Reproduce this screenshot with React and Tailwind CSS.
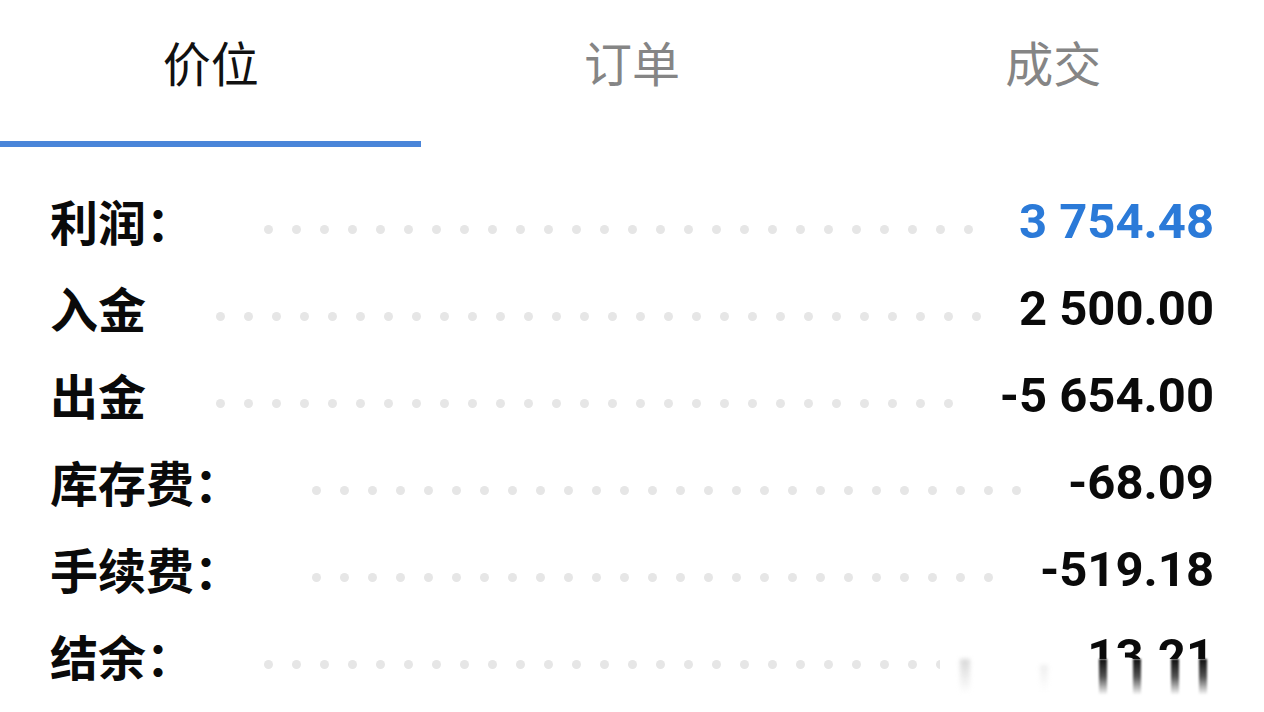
import React, { useState } from "react";

const tabs = ["价位", "订单", "成交"];

const rows = [
  { label: "利润：", value: "3 754.48", blue: true },
  { label: "入金", value: "2 500.00" },
  { label: "出金", value: "-5 654.00" },
  { label: "库存费：", value: "-68.09" },
  { label: "手续费：", value: "-519.18" },
  { label: "结余：", value: "13.21", last: true },
];

const cjk = "font-['Noto_Sans_CJK_SC','Noto_Sans',sans-serif]";
const num = "font-['Roboto','Liberation_Sans',sans-serif]";

// dotted leader between the label and the amount; dots that don't fit wrap away
function Dots() {
  return (
    <div className="flex-1 ml-[70px] mr-[32px] mt-[16px] h-[9px] overflow-hidden flex flex-wrap gap-x-[19px]">
      {Array.from({ length: 40 }).map((_, i) => (
        <span key={i} className="w-[9px] h-[9px] rounded-full bg-[#e6e6e6] shrink-0" />
      ))}
    </div>
  );
}

export default function App() {
  const [tab, setTab] = useState(0);

  return (
    <div className={"w-[1264px] h-[712px] bg-white overflow-hidden " + cjk}>
      <div className="flex">
        {tabs.map((t, i) => (
          <button
            key={t}
            type="button"
            onClick={() => setTab(i)}
            className="flex-1 flex flex-col"
          >
            <div
              className={
                "h-[122px] flex items-center justify-center text-[48px] leading-none " +
                (tab === i ? "text-[#111111]" : "text-[#858585]")
              }
            >
              {t}
            </div>
            <div className="h-[19px]" />
            <div className={"h-[6px] w-full " + (tab === i ? "bg-[#4a85d9]" : "bg-transparent")} />
          </button>
        ))}
      </div>

      <div className="pt-[31px] px-[50px]">
        {rows.map((r) => (
          <div key={r.label} className="relative h-[87px] flex items-center">
            <div className="mb-[4px] text-[48px] leading-none font-bold text-[#0a0a0a] whitespace-nowrap">
              {r.label}
            </div>
            <Dots />
            <div
              className={
                num +
                " text-[49px] leading-none font-bold whitespace-nowrap " +
                (r.blue ? "text-[#2b7ad8]" : "text-[#0a0a0a]")
              }
            >
              {r.value}
            </div>
            {r.last && (
              <div className="absolute left-[890px] right-[-40px] top-[46px] h-[40px] bg-white">
                <div className="absolute left-[20px] top-0 w-[10px] h-[34px] bg-gradient-to-b from-[#d8d8d8] to-transparent blur-[2px]" />
                <div className="absolute left-[100px] top-[6px] w-[8px] h-[26px] bg-gradient-to-b from-[#eeeeee] to-transparent blur-[2px]" />
                <div className="absolute left-[159px] top-0 w-[8px] h-[36px] bg-gradient-to-b from-[#111111] via-[#555555] to-transparent blur-[1px]" />
                <div className="absolute left-[193px] top-0 w-[8px] h-[36px] bg-gradient-to-b from-[#111111] via-[#555555] to-transparent blur-[1px]" />
                <div className="absolute left-[231px] top-0 w-[8px] h-[36px] bg-gradient-to-b from-[#111111] via-[#555555] to-transparent blur-[1px]" />
                <div className="absolute left-[259px] top-0 w-[8px] h-[36px] bg-gradient-to-b from-[#111111] via-[#555555] to-transparent blur-[1px]" />
              </div>
            )}
          </div>
        ))}
      </div>
    </div>
  );
}
